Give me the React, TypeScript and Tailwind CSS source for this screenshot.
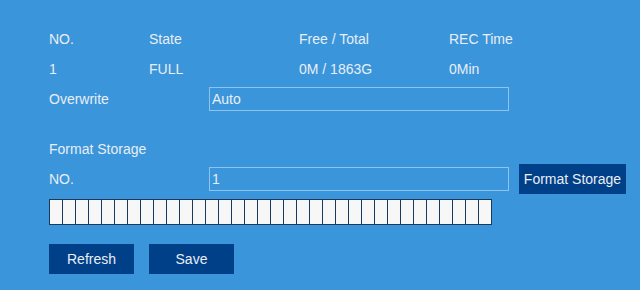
const cells = Array.from({ length: 34 }, (_, i) => i);

const header = [
  { label: "NO.", value: "1", w: "w-[100px]" },
  { label: "State", value: "FULL", w: "w-[150px]" },
  { label: "Free / Total", value: "0M / 1863G", w: "w-[150px]" },
  { label: "REC Time", value: "0Min", w: "w-[150px]" },
];

const App = () => {
  return (
    <div className="w-[640px] h-[290px] bg-[#3a95db] text-[#e8eef6] text-[14px] font-['Liberation_Sans',Arial,sans-serif] pl-[49px] pt-[24px]">
      <div className="flex h-[30px] items-center">
        {header.map((h) => (
          <div key={h.label} className={h.w}>{h.label}</div>
        ))}
      </div>
      <div className="flex h-[30px] items-center">
        {header.map((h) => (
          <div key={h.label} className={h.w}>{h.value}</div>
        ))}
      </div>
      <div className="flex h-[30px] items-center">
        <div className="w-[160px]">Overwrite</div>
        <div className="w-[300px] h-[24px] border border-[#8dc3ef] flex items-center px-[2px]">Auto</div>
      </div>

      <div className="flex h-[30px] items-center mt-[20px]">Format Storage</div>
      <div className="flex h-[30px] items-center">
        <div className="w-[160px]">NO.</div>
        <div className="w-[300px] h-[24px] border border-[#8dc3ef] flex items-center px-[2px]">1</div>
        <button className="ml-[10px] w-[107px] h-[30px] bg-[#004088] text-[#e8eef6]">Format Storage</button>
      </div>

      <div className="flex w-[443px] h-[26px] mt-[5px] border border-[#173a5e] bg-[#f7f7f7]">
        {cells.map((c) => (
          <div key={c} className={c === 0 ? "w-[12px] h-full" : "w-[13px] h-full border-l border-[#173a5e]"} />
        ))}
      </div>

      <div className="flex gap-[15px] mt-[19px]">
        <button className="w-[85px] h-[30px] bg-[#004088]">Refresh</button>
        <button className="w-[85px] h-[30px] bg-[#004088]">Save</button>
      </div>
    </div>
  );
};

export default App;
